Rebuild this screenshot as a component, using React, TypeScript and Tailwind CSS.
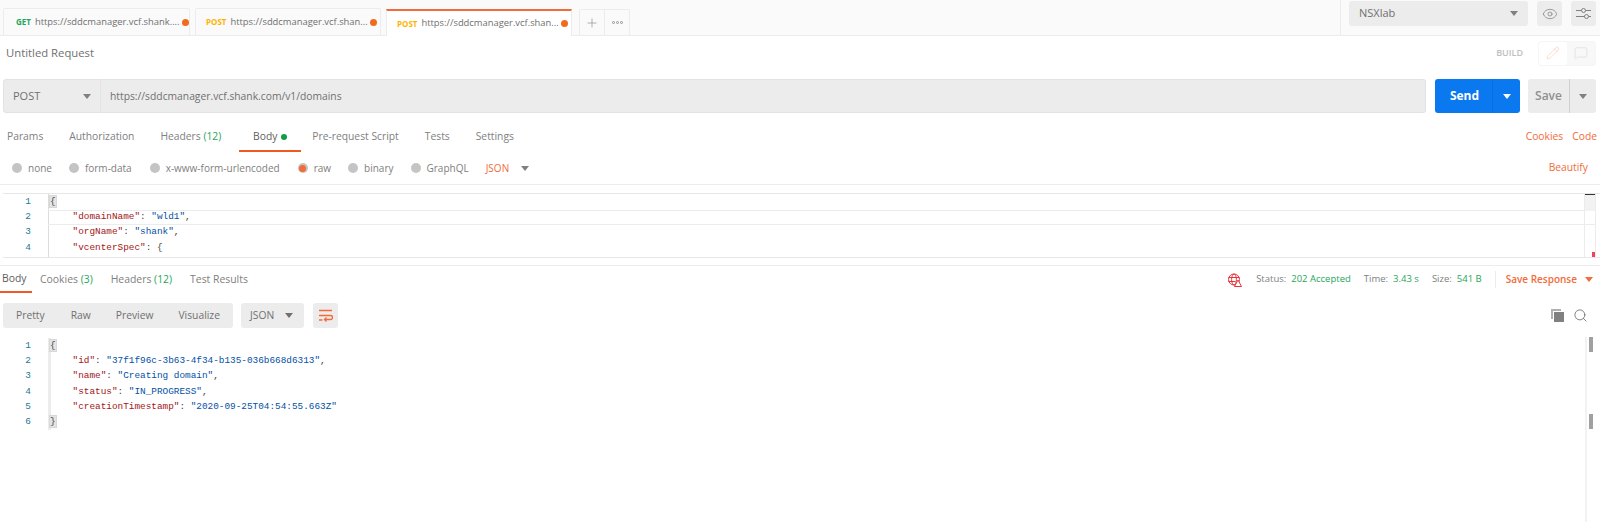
import React from 'react';
import { Eye, Pencil, Plus, Search, MessageSquare } from 'lucide-react';

const Caret = ({ className = 'border-t-[#808080]' }: { className?: string }) => (
  <span className={`inline-block w-0 h-0 border-x-[4px] border-x-transparent border-t-[5px] ${className}`} />
);

const RequestTab = ({ method, color, url, active, width, pad }: { method: string; color: string; url: string; active?: boolean; width: string; pad: string }) => (
  <div
    className={`${width} ${pad} h-[27px] flex items-center pr-[3px] border-x border-[#ececec] ${
      active ? 'bg-white border-t-2 border-t-[#f26b3a] mb-[-1px]' : 'bg-[#fafafa] border-t border-t-[#ececec] rounded-t-[2px]'
    }`}
  >
    <span className={`text-[8px] font-bold shrink-0 mr-[4px] ${color}`}>{method}</span>
    <span className="text-[9.4px] text-[#707070] flex-1 whitespace-nowrap">{url}</span>
    <span className="w-[7px] h-[7px] rounded-full bg-[#f26b1d] shrink-0 ml-[2px]" />
  </div>
);

const Radio = ({ label, on }: { label: string; on?: boolean }) => (
  <div className="flex items-center gap-[6px]">
    <span className="w-[10px] h-[10px] rounded-full flex items-center justify-center bg-[#c4c4c4]">
      {on && <span className="w-[7px] h-[7px] rounded-full bg-[#f26b3a]" />}
    </span>
    <span className="text-[10px] text-[#808080]">{label}</span>
  </div>
);

const Key = ({ children }: { children: string }) => <span className="text-[#a31515]">{children}</span>;
const Str = ({ children }: { children: string }) => <span className="text-[#0451a5]">{children}</span>;

const Line = ({ n, children }: { n: number; children?: React.ReactNode }) => (
  <div className="relative flex h-[15.33px] items-center">
    <span className="w-[28px] text-right text-[#237893] shrink-0">{n}</span>
    <span className="pl-[19px] whitespace-pre text-[#444]">{children}</span>
  </div>
);

const Bracket = ({ children }: { children: string }) => (
  <span className="bg-[#e4e4e4] outline outline-[#d8d8d8]">{children}</span>
);

const GlobeWarn = () => (
  <svg width="14" height="14" viewBox="0 0 14 14" fill="none" stroke="#e8343a" strokeWidth="1">
    <circle cx="6" cy="6.5" r="5.5" />
    <ellipse cx="6" cy="6.5" rx="2.4" ry="5.5" />
    <path d="M.5 4.5h11M.5 8.5h7" />
    <path d="M10 7 13.5 13.5h-7z" fill="#fff" />
  </svg>
);

const WrapIcon = () => (
  <svg width="15" height="13" viewBox="0 0 15 13" fill="none" stroke="#f26b3a" strokeWidth="1.4">
    <path d="M1 1.5h13M1 6.5h11.5a1.8 1.8 0 0 1 0 4H7M1 11h3.5" />
    <path d="M8.5 8.5 6.5 10.5l2 2" />
  </svg>
);

const CopyIcon = () => (
  <svg width="13" height="13" viewBox="0 0 13 13">
    <path d="M0 0h10v2H2v8H0z" fill="#b0b0b0" />
    <rect x="3" y="3" width="10" height="10" fill="#808080" />
  </svg>
);

const SettingsIcon = () => (
  <svg width="15" height="13" viewBox="0 0 15 13" fill="none" stroke="#808080" strokeWidth="1">
    <path d="M0 3.5h5.5M9.5 3.5H15M0 9.5h8.5M12.5 9.5H15" />
    <circle cx="7.5" cy="3.5" r="2" />
    <circle cx="10.5" cy="9.5" r="2" />
  </svg>
);

export default function App() {
  return (
    <div className="w-[1600px] h-[522px] overflow-hidden bg-white text-[#808080] font-['Open_Sans',sans-serif]">
      {/* tab strip */}
      <div className="h-[36px] bg-[#fafafa] border-b border-[#ececec] flex justify-between">
        <div className="flex items-end pl-[3px]">
          <RequestTab width="w-[187px]" pad="pl-[12px]" method="GET" color="text-[#26a65b]" url="https://sddcmanager.vcf.shank...." />
          <div className="ml-[5px]">
            <RequestTab width="w-[186px]" pad="pl-[10px]" method="POST" color="text-[#ffb400]" url="https://sddcmanager.vcf.shan..." />
          </div>
          <div className="ml-[5px]">
            <RequestTab width="w-[186px]" pad="pl-[10px]" method="POST" color="text-[#ffb400]" url="https://sddcmanager.vcf.shan..." active />
          </div>
          <div className="ml-[7px] flex h-[26px] border border-b-0 border-[#ececec] rounded-t-[2px]">
            <div className="w-[25px] flex items-center justify-center border-r border-[#ececec]">
              <Plus size={14} strokeWidth={1.2} color="#909090" />
            </div>
            <div className="w-[24px] flex items-center justify-center gap-[1px]">
              <span className="w-[3px] h-[3px] rounded-full border border-[#909090]" />
              <span className="w-[3px] h-[3px] rounded-full border border-[#909090]" />
              <span className="w-[3px] h-[3px] rounded-full border border-[#909090]" />
            </div>
          </div>
        </div>
        <div className="flex items-start border-l border-[#ececec] pl-[8px] pr-[4px] pt-[1px] w-[260px]">
          <div className="w-[179px] h-[25px] bg-[#ececec] rounded-[3px] flex items-center justify-between pl-[10px] pr-[10px]">
            <span className="text-[11px] text-[#707070]">NSXlab</span>
            <Caret />
          </div>
          <div className="ml-[9px] w-[25px] h-[25px] bg-[#ececec] rounded-[3px] flex items-center justify-center">
            <Eye size={16} strokeWidth={1.1} color="#808080" />
          </div>
          <div className="ml-[9px] w-[25px] h-[25px] bg-[#ececec] rounded-[3px] flex items-center justify-center">
            <SettingsIcon />
          </div>
        </div>
      </div>

      {/* request title */}
      <div className="h-[34px] flex items-center justify-between pl-[6px] pr-[4px]">
        <span className="text-[11.3px] font-medium text-[#707070]">Untitled Request</span>
        <div className="flex items-center">
          <span className="text-[9px] font-semibold text-[#c0c0c0] mr-[15px]">BUILD</span>
          <div className="flex h-[25px] w-[58px] bg-[#f8f8f8] rounded-[3px] border border-[#f6f6f6]">
            <div className="w-[28px] bg-white rounded-[3px] flex items-center justify-center">
              <Pencil size={14} strokeWidth={1} color="#f9c4b0" />
            </div>
            <div className="flex-1 flex items-center justify-center">
              <MessageSquare size={14} strokeWidth={1} color="#d8d8d8" />
            </div>
          </div>
        </div>
      </div>

      {/* url bar */}
      <div className="mt-[9px] flex h-[34px] pl-[3px] pr-[4px]">
        <div className="w-[98px] bg-[#ececec] border border-[#e2e2e2] rounded-l-[3px] flex items-center justify-between pl-[9px] pr-[9px] pt-[1px]">
          <span className="text-[11px] text-[#707070]">POST</span>
          <Caret />
        </div>
        <div className="w-[1325px] bg-[#ececec] border border-l-0 border-[#e2e2e2] rounded-r-[3px] flex items-center pl-[9px] pt-[1px]">
          <span className="text-[10.3px] text-[#707070]">https://sddcmanager.vcf.shank.com/v1/domains</span>
        </div>
        <div className="ml-[9px] w-[85px] bg-[#0a78ee] rounded-[3px] flex text-white">
          <div className="w-[58px] flex items-center justify-center pl-[2px] text-[12px] font-bold border-r border-[#0a6fdc]">Send</div>
          <div className="flex-1 flex items-center justify-center"><Caret className="border-t-white" /></div>
        </div>
        <div className="ml-[8px] w-[68px] bg-[#ececec] rounded-[3px] flex">
          <div className="w-[42px] flex items-center justify-center text-[12px] font-semibold text-[#909090] border-r border-[#d0d0d0]">Save</div>
          <div className="flex-1 flex items-center justify-center"><Caret /></div>
        </div>
      </div>

      {/* request tabs */}
      <div className="mt-[9px] h-[30px] flex items-center justify-between pl-[7px] pr-[3px] text-[10.3px] text-[#808080]">
        <div className="flex items-center h-full">
          <span>Params</span>
          <span className="ml-[26px]">Authorization</span>
          <span className="ml-[26px]">Headers <span className="text-[#26a65b]">(12)</span></span>
          <div className="ml-[18px] w-[62px] h-full flex items-center justify-center gap-[4px] pt-[2px] border-b-2 border-[#f05a22] text-[#606060]">
            <span>Body</span>
            <span className="w-[6px] h-[6px] rounded-full bg-[#0f9d45]" />
          </div>
          <span className="ml-[11px]">Pre-request Script</span>
          <span className="ml-[26px]">Tests</span>
          <span className="ml-[26px]">Settings</span>
        </div>
        <div className="flex gap-[9px] text-[#f26b3a]">
          <span>Cookies</span>
          <span>Code</span>
        </div>
      </div>

      {/* body type */}
      <div className="h-[33px] flex items-center justify-between pl-[12px] pr-[12px] border-b border-[#ececec]">
        <div className="flex items-center">
          <Radio label="none" />
          <div className="ml-[17px]"><Radio label="form-data" /></div>
          <div className="ml-[18px]"><Radio label="x-www-form-urlencoded" /></div>
          <div className="ml-[18px]"><Radio label="raw" on /></div>
          <div className="ml-[17px]"><Radio label="binary" /></div>
          <div className="ml-[17px]"><Radio label="GraphQL" /></div>
          <span className="ml-[17px] text-[10px] text-[#f26b3a]">JSON</span>
          <span className="ml-[12px] flex"><Caret /></span>
        </div>
        <span className="text-[10.3px] text-[#f26b3a]">Beautify</span>
      </div>

      {/* request editor */}
      <div className="relative mt-[8px] h-[65px] ml-[3px] border-y border-[#e8e8e8] font-['Liberation_Mono',monospace] text-[9.4px] overflow-hidden">
        <div className="absolute left-[45px] top-0 bottom-0 w-px bg-[#dcdcdc]" />
        <Line n={1}><Bracket>{'{'}</Bracket></Line>
        <div className="absolute left-[45px] top-[16px] h-[15px] w-[1548px] border-y border-[#ececec]" />
        <Line n={2}>{'    '}<Key>"domainName"</Key>: <Str>"wld1"</Str>,</Line>
        <Line n={3}>{'    '}<Key>"orgName"</Key>: <Str>"shank"</Str>,</Line>
        <Line n={4}>{'    '}<Key>"vcenterSpec"</Key>: {'{'}</Line>
        <div className="absolute left-[1581px] top-0 bottom-0 w-[12px] border-x border-[#ececec]">
          <div className="h-px bg-[#333]" />
          <div className="h-[16px] bg-[#f2f2f2]" />
          <div className="absolute right-0 bottom-0 w-[3px] h-[5px] bg-[#f5405a]" />
        </div>
      </div>

      {/* response header */}
      <div className="mt-[7px] h-[28px] border-t border-[#ececec] flex items-center justify-between pr-[7px] text-[10.4px] text-[#808080]">
        <div className="flex items-center h-full">
          <div className="w-[32px] h-full flex items-center pl-[2px] border-b-2 border-[#f05a22] text-[#606060]">Body</div>
          <span className="ml-[8px]">Cookies <span className="text-[#26a65b]">(3)</span></span>
          <span className="ml-[18px]">Headers <span className="text-[#26a65b]">(12)</span></span>
          <span className="ml-[18px]">Test Results</span>
        </div>
        <div className="flex items-center text-[9.5px]">
          <GlobeWarn />
          <span className="ml-[14px]">Status:</span>
          <span className="ml-[5px] text-[#26a65b]">202 Accepted</span>
          <span className="ml-[13px]">Time:</span>
          <span className="ml-[5px] text-[#26a65b]">3.43 s</span>
          <span className="ml-[13px]">Size:</span>
          <span className="ml-[5px] text-[#26a65b]">541 B</span>
          <div className="ml-[13px] w-px h-[17px] bg-[#ececec]" />
          <span className="ml-[10px] text-[10px] font-semibold text-[#f26b3a]">Save Response</span>
          <span className="ml-[8px] flex"><Caret className="border-t-[#f26b3a]" /></span>
        </div>
      </div>

      {/* response toolbar */}
      <div className="mt-[10px] h-[25px] flex items-center justify-between pl-[3px] pr-[12px] text-[10.3px] text-[#707070]">
        <div className="flex h-full">
          <div className="w-[230px] bg-[#ececec] rounded-[3px] flex items-center pl-[13px]">
            <span>Pretty</span>
            <span className="ml-[26px]">Raw</span>
            <span className="ml-[25px]">Preview</span>
            <span className="ml-[25px]">Visualize</span>
          </div>
          <div className="ml-[8px] w-[63px] bg-[#ececec] rounded-[3px] flex items-center justify-between pl-[9px] pr-[11px]">
            <span>JSON</span>
            <Caret className="border-t-[#707070]" />
          </div>
          <div className="ml-[9px] w-[25px] bg-[#ececec] rounded-[3px] flex items-center justify-center">
            <WrapIcon />
          </div>
        </div>
        <div className="flex items-center gap-[9px]">
          <CopyIcon />
          <Search size={15} strokeWidth={1.4} color="#707070" />
        </div>
      </div>

      {/* response body */}
      <div className="relative mt-[9px] h-[187px] ml-[3px] font-['Liberation_Mono',monospace] text-[9.4px] pt-[1px]">
        <div className="absolute left-[45px] top-[1px] w-[3px] h-[92px] bg-[#ececec]" />
        <Line n={1}><Bracket>{'{'}</Bracket></Line>
        <Line n={2}>{'    '}<Key>"id"</Key>: <Str>"37f1f96c-3b63-4f34-b135-036b668d6313"</Str>,</Line>
        <Line n={3}>{'    '}<Key>"name"</Key>: <Str>"Creating domain"</Str>,</Line>
        <Line n={4}>{'    '}<Key>"status"</Key>: <Str>"IN_PROGRESS"</Str>,</Line>
        <Line n={5}>{'    '}<Key>"creationTimestamp"</Key>: <Str>"2020-09-25T04:54:55.663Z"</Str></Line>
        <Line n={6}><Bracket>{'}'}</Bracket></Line>
        <div className="absolute left-[1582px] top-0 bottom-0 w-[2px] bg-[#f2f2f2]" />
        <div className="absolute left-[1586px] top-0 w-[4px] h-[15px] bg-[#a0a0a0]" />
        <div className="absolute left-[1586px] top-[77px] w-[4px] h-[15px] bg-[#a0a0a0]" />
      </div>
    </div>
  );
}
